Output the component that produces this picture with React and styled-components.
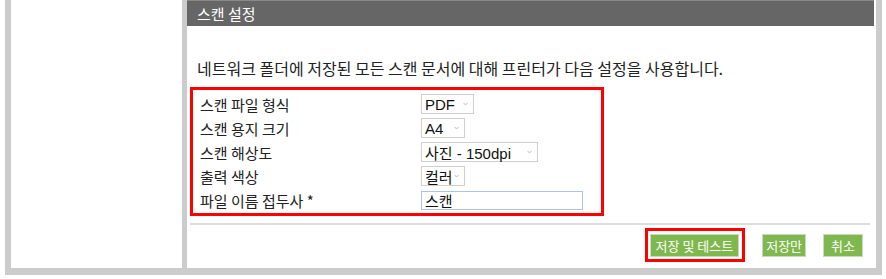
import React from "react";
import styled, { createGlobalStyle } from "styled-components";

const GlobalStyle = createGlobalStyle`
  html, body {
    margin: 0;
    padding: 0;
    background: #ffffff;
  }
  body {
    font-family: "Noto Sans CJK KR", "Liberation Sans", sans-serif;
  }
`;

const Frame = styled.div`
  margin-left: 5px;
  width: 865px;
  height: 268px;
  border: 6px solid #cccccc;
  border-top: none;
  border-bottom-width: 7px;
  display: grid;
  grid-template-columns: 171px 1fr;
  background: #ffffff;
`;

const SidePanel = styled.div`
  background: #ffffff;
`;

const MainPanel = styled.div`
  border-left: 5px solid #cccccc;
  display: flex;
  flex-direction: column;
  padding-right: 1px;
`;

const Header = styled.div`
  height: 25px;
  border-top: 1px solid #8a8a8a;
  background: #666666;
  color: #ffffff;
  font-size: 15px;
  line-height: 25px;
  padding-left: 10px;
  margin-right: 1px;
`;

const Description = styled.p`
  margin: 32px 0 0 10px;
  font-size: 16px;
  line-height: 20px;
  color: #222222;
`;

const FormBox = styled.div`
  margin: 9px 0 0 3px;
  width: 401px;
  border: 3px solid #ff0000;
  padding: 2px 0 1px 7px;
  display: flex;
  flex-direction: column;
`;

const Row = styled.div`
  height: 24px;
  display: grid;
  grid-template-columns: 221px 1fr;
  align-items: center;
`;

const Label = styled.span`
  font-size: 15px;
  color: #222222;
  white-space: nowrap;
`;

const SelectBox = styled.div`
  width: ${(p) => p.$width}px;
  height: 20px;
  box-sizing: border-box;
  border: 1px solid #cfcfcf;
  background: #ffffff;
  display: flex;
  align-items: center;
  justify-content: space-between;
  padding: 0 5px 0 3px;
  font-family: "Liberation Sans", "Noto Sans CJK KR", sans-serif;
  font-size: 15px;
  color: #111111;
`;

const Chevron = styled.svg`
  width: 5px;
  height: 4px;
  flex: none;
`;

const TextInput = styled.input`
  width: 162px;
  height: 19px;
  box-sizing: border-box;
  border: 1px solid #a9c4e4;
  padding: 0 3px;
  font-family: "Noto Sans CJK KR", "Liberation Sans", sans-serif;
  font-size: 15px;
  color: #111111;
  outline: none;
`;

const Rule = styled.div`
  margin: 7px 5px 0 3px;
  height: 2px;
  background: #dddddd;
`;

const ButtonRow = styled.div`
  margin-top: 3px;
  display: flex;
  align-items: center;
  justify-content: flex-end;
  gap: 17px;
  padding-right: 12px;
`;

const Highlight = styled.div`
  border: 3px solid #ff0000;
  padding: 1px 3px 2px 2px;
`;

const GreenButton = styled.button`
  height: 23px;
  box-sizing: border-box;
  border: 1px solid #c9d9bd;
  background: #7fb84e;
  color: #ffffff;
  font-family: "Noto Sans CJK KR", "Liberation Sans", sans-serif;
  font-size: 13px;
  padding: 0 ${(p) => p.$pad}px;
  cursor: pointer;
`;

function Select({ value, width }) {
  return (
    <SelectBox $width={width}>
      <span>{value}</span>
      <Chevron viewBox="0 0 5 4">
        <path d="M0.5 0.8 L2.5 3 L4.5 0.8" fill="none" stroke="#b5b5b5" strokeWidth="0.9" />
      </Chevron>
    </SelectBox>
  );
}

const rows = [
  { label: "스캔 파일 형식", value: "PDF", width: 53 },
  { label: "스캔 용지 크기", value: "A4", width: 44 },
  { label: "스캔 해상도", value: "사진 - 150dpi", width: 117 },
  { label: "출력 색상", value: "컬러", width: 44 },
];

export default function App() {
  return (
    <>
      <GlobalStyle />
      <Frame>
        <SidePanel />
        <MainPanel>
          <Header>스캔 설정</Header>
          <Description>
            네트워크 폴더에 저장된 모든 스캔 문서에 대해 프린터가 다음 설정을 사용합니다.
          </Description>
          <FormBox>
            {rows.map((r) => (
              <Row key={r.label}>
                <Label>{r.label}</Label>
                <Select value={r.value} width={r.width} />
              </Row>
            ))}
            <Row>
              <Label>파일 이름 접두사 *</Label>
              <TextInput defaultValue="스캔" />
            </Row>
          </FormBox>
          <Rule />
          <ButtonRow>
            <Highlight>
              <GreenButton $pad={5}>저장 및 테스트</GreenButton>
            </Highlight>
            <GreenButton $pad={3}>저장만</GreenButton>
            <GreenButton $pad={7}>취소</GreenButton>
          </ButtonRow>
        </MainPanel>
      </Frame>
    </>
  );
}
